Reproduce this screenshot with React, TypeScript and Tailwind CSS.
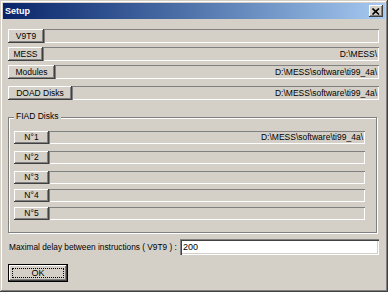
const raised =
  "shadow-[inset_-1px_-1px_0_#404040,inset_1px_1px_0_#ffffff,inset_-2px_-2px_0_#808080,inset_2px_2px_0_#d4d0c8]";
const sunkenFlat = "shadow-[inset_1px_1px_0_#808080,inset_-1px_-1px_0_#ffffff]";

function PathRow({ label, w, value, mt }: { label: string; w: string; value?: string; mt: string }) {
  return (
    <div className={`flex h-[14px] ${mt}`}>
      <button className={`${w} h-full shrink-0 bg-[#d4d0c8] ${raised} flex items-center justify-center leading-none`}>
        {label}
      </button>
      <div className={`flex-1 h-full ${sunkenFlat} flex items-center justify-end pr-[2px] leading-none`}>{value}</div>
    </div>
  );
}

function DiskRow({ n, value, mt }: { n: number; value?: string; mt: string }) {
  return (
    <div className={`flex h-[13px] ${mt}`}>
      <button className={`w-[35px] h-full shrink-0 bg-[#d4d0c8] ${raised} flex items-center justify-center leading-none`}>
        N°{n}
      </button>
      <div className={`flex-1 h-full ${sunkenFlat} flex items-center justify-end pr-[2px] leading-none`}>{value}</div>
    </div>
  );
}

export default function App() {
  const soft = "D:\\MESS\\software\\ti99_4a\\";
  return (
    <div className="w-[388px] h-[292px] bg-[#d4d0c8] p-[3px] font-['Liberation_Sans',Arial,sans-serif] text-[8.5px] text-black shadow-[inset_-1px_-1px_0_#404040,inset_1px_1px_0_#d4d0c8,inset_-2px_-2px_0_#808080,inset_2px_2px_0_#ffffff]">
      {/* title bar */}
      <div className="h-[16px] bg-linear-to-r from-[#0a246a] to-[#a6caf0] flex items-center justify-between pl-[2px] pr-[2px]">
        <span className="text-white font-bold text-[9px] leading-none">Setup</span>
        <div className={`w-[14px] h-[12px] bg-[#d4d0c8] ${raised} flex items-center justify-center`}>
          <svg width="8" height="7" viewBox="0 0 8 7">
            <path d="M0.5 0.5 L7 6.5 M7 0.5 L0.5 6.5" stroke="#000" strokeWidth="1.6" />
          </svg>
        </div>
      </div>

      <div className="ml-[5px] w-[371px] flex flex-col">
        <PathRow label="V9T9" w="w-[36px]" mt="mt-[10px]" />
        <PathRow label="MESS" w="w-[35px]" value="D:\MESS\" mt="mt-[4px]" />
        <PathRow label="Modules" w="w-[47px]" value={soft} mt="mt-[4px]" />
        <PathRow label="DOAD Disks" w="w-[64px]" value={soft} mt="mt-[7px]" />

        {/* FIAD group */}
        <div className="relative mt-[17px] w-[369px] border border-[#808080] shadow-[inset_1px_1px_0_#ffffff,1px_1px_0_#ffffff] pt-[13px] pl-[5px] pr-[11px] pb-[12px]">
          <span className="absolute left-[5px] top-[-6px] bg-[#d4d0c8] px-[2px] leading-none">FIAD Disks</span>
          <DiskRow n={1} value={soft} mt="mt-0" />
          <DiskRow n={2} mt="mt-[7px]" />
          <DiskRow n={3} mt="mt-[7px]" />
          <DiskRow n={4} mt="mt-[5px]" />
          <DiskRow n={5} mt="mt-[5px]" />
        </div>

        {/* delay */}
        <div className="flex items-center justify-between mt-[6px] h-[16px]">
          <span className="pl-[1px] whitespace-nowrap leading-none text-[8.3px]">
            Maximal delay between instructions ( V9T9 ) :
          </span>
          <div className="w-[199px] shrink-0 h-full bg-white shadow-[inset_1px_1px_0_#808080,inset_2px_2px_0_#404040,inset_-1px_-1px_0_#ffffff,inset_-2px_-2px_0_#d4d0c8] flex items-center pl-[3px] text-[9px] leading-none">
            200
          </div>
        </div>

        <button className="mt-[9px] w-[60px] h-[18px] border border-black bg-[#d4d0c8] shadow-[inset_-1px_-1px_0_#404040,inset_1px_1px_0_#ffffff,inset_-2px_-2px_0_#808080] p-[3px]">
          <div className="w-full h-full border border-dotted border-black flex items-center justify-center leading-none text-[9px]">
            OK
          </div>
        </button>
      </div>
    </div>
  );
}
